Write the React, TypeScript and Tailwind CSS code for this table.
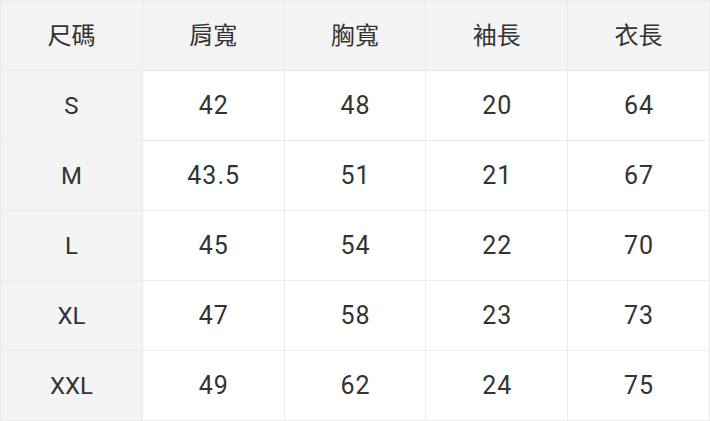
const headers = ["尺碼", "肩寬", "胸寬", "袖長", "衣長"];

const rows = [
  ["S", "42", "48", "20", "64"],
  ["M", "43.5", "51", "21", "67"],
  ["L", "45", "54", "22", "70"],
  ["XL", "47", "58", "23", "73"],
  ["XXL", "49", "62", "24", "75"],
];

export default function App() {
  return (
    <div className="w-[710px] h-[421px] bg-white">
      <table
        className="w-[710px] border-collapse table-fixed text-[#333333] text-[24px]"
        style={{ fontFamily: 'Roboto, "Noto Sans CJK TC", sans-serif' }}
      >
        <thead>
          <tr className="h-[70px]">
            {headers.map((h) => (
              <th
                key={h}
                className="border border-[#ebebeb] bg-[#f4f4f4] font-normal text-center p-0"
              >
                {h}
              </th>
            ))}
          </tr>
        </thead>
        <tbody>
          {rows.map((r) => (
            <tr key={r[0]} className="h-[70px]">
              {r.map((c, i) => (
                <td
                  key={i}
                  className={
                    i === 0
                      ? "border border-[#ebebeb] bg-[#f4f4f4] text-center p-0"
                      : "border border-[#ebebeb] bg-white text-center p-0 pl-[1px] text-[25px] tracking-[1px]"
                  }
                >
                  {c}
                </td>
              ))}
            </tr>
          ))}
        </tbody>
      </table>
    </div>
  );
}
